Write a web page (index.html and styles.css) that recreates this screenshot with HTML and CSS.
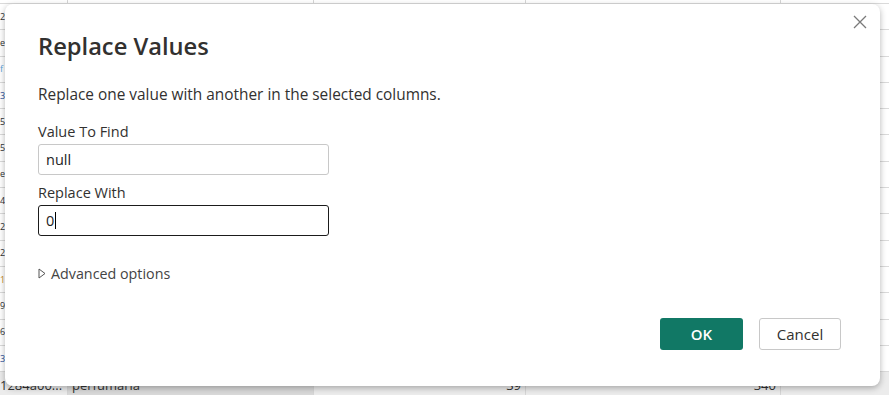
FILE: index.html
```html
<!DOCTYPE html>
<html lang="en">
<head>
  <meta charset="UTF-8">
  <title>Replace Values</title>
  <link rel="stylesheet" href="styles.css">
</head>
<body>

  <!-- grid behind the dialog -->
  <div class="sheet">
    <div class="row top"><div class="cell c1"></div><div class="cell c2"></div><div class="cell c3"></div><div class="cell c4"></div><div class="cell c5"></div></div>
    <div class="row"><div class="cell c1"><span class="peek">2</span></div><div class="cell c2"></div><div class="cell c3"></div><div class="cell c4"></div><div class="cell c5"></div></div>
    <div class="row"><div class="cell c1"><span class="peek">e</span></div><div class="cell c2"></div><div class="cell c3"></div><div class="cell c4"></div><div class="cell c5"></div></div>
    <div class="row"><div class="cell c1 blue-l"><span class="peek">f</span></div><div class="cell c2"></div><div class="cell c3"></div><div class="cell c4"></div><div class="cell c5"></div></div>
    <div class="row"><div class="cell c1 blue"><span class="peek">3</span></div><div class="cell c2"></div><div class="cell c3"></div><div class="cell c4"></div><div class="cell c5"></div></div>
    <div class="row"><div class="cell c1"><span class="peek">5</span></div><div class="cell c2"></div><div class="cell c3"></div><div class="cell c4"></div><div class="cell c5"></div></div>
    <div class="row"><div class="cell c1"><span class="peek">5</span></div><div class="cell c2"></div><div class="cell c3"></div><div class="cell c4"></div><div class="cell c5"></div></div>
    <div class="row"><div class="cell c1"><span class="peek">e</span></div><div class="cell c2"></div><div class="cell c3"></div><div class="cell c4"></div><div class="cell c5"></div></div>
    <div class="row"><div class="cell c1"><span class="peek">4</span></div><div class="cell c2"></div><div class="cell c3"></div><div class="cell c4"></div><div class="cell c5"></div></div>
    <div class="row"><div class="cell c1"><span class="peek">2</span></div><div class="cell c2"></div><div class="cell c3"></div><div class="cell c4"></div><div class="cell c5"></div></div>
    <div class="row"><div class="cell c1"><span class="peek">2</span></div><div class="cell c2"></div><div class="cell c3"></div><div class="cell c4"></div><div class="cell c5"></div></div>
    <div class="row"><div class="cell c1 orange"><span class="peek">1</span></div><div class="cell c2"></div><div class="cell c3"></div><div class="cell c4"></div><div class="cell c5"></div></div>
    <div class="row"><div class="cell c1"><span class="peek">9</span></div><div class="cell c2"></div><div class="cell c3"></div><div class="cell c4"></div><div class="cell c5"></div></div>
    <div class="row"><div class="cell c1"><span class="peek">6</span></div><div class="cell c2"></div><div class="cell c3"></div><div class="cell c4"></div><div class="cell c5"></div></div>
    <div class="row"><div class="cell c1 blue"><span class="peek">3</span></div><div class="cell c2"></div><div class="cell c3"></div><div class="cell c4"></div><div class="cell c5"></div></div>
    <div class="row last"><div class="cell c1">1284a00...</div><div class="cell c2">perfumaria</div><div class="cell c3 num">39</div><div class="cell c4 num">340</div><div class="cell c5"></div></div>
  </div>

  <!-- dialog -->
  <div class="dialog">
    <button class="close-btn" aria-label="Close">
      <svg width="14" height="14" viewBox="0 0 14 14">
        <path d="M1 1 L13 13 M13 1 L1 13" stroke="#7a7a7a" stroke-width="1.3" fill="none"/>
      </svg>
    </button>

    <h1 class="dialog-title">Replace Values</h1>
    <p class="dialog-desc">Replace one value with another in the selected columns.</p>

    <label class="field-label">Value To Find</label>
    <div class="text-input">null</div>

    <label class="field-label">Replace With</label>
    <div class="text-input focused">0<span class="caret"></span></div>

    <div class="advanced">
      <svg width="8" height="11" viewBox="0 0 8 11">
        <path d="M1 1 L7 5.5 L1 10 Z" stroke="#555" stroke-width="1" fill="none"/>
      </svg>
      <span>Advanced options</span>
    </div>

    <div class="dialog-footer">
      <button class="btn btn-primary">OK</button>
      <button class="btn btn-secondary">Cancel</button>
    </div>
  </div>

</body>
</html>
```

FILE: styles.css
```css
body {
  margin: 0;
  padding: 0;
  background-color: #fff;
  font-family: 'Open Sans', 'Noto Sans', sans-serif;
  width: 889px;
  height: 395px;
  overflow: hidden;
  position: relative;
}

/* spreadsheet behind */
.sheet {
  display: flex;
  flex-direction: column;
  font-size: 13px;
  color: #333;
}

.row {
  display: flex;
  height: 26.3px;
  border-bottom: 1px solid #dadada;
  box-sizing: border-box;
}

.row.top {
  height: 4px;
}

.row.last {
  height: 26px;
  background-color: #ececec;
}

.cell {
  border-right: 1px solid #d6d6d6;
  box-sizing: border-box;
  display: flex;
  align-items: center;
  white-space: nowrap;
  overflow: hidden;
  padding: 0 4px;
}

.c1 { width: 68px; padding-left: 0; }
.c2 { width: 246px; }
.c3 { width: 212px; }
.c4 { width: 255px; }
.c5 { flex: 1; border-right: none; }

.peek {
  font-size: 9px;
  line-height: 12px;
}

.row.last .c2 {
  background-color: #d9d9d9;
}

.num {
  justify-content: flex-end;
}

.blue { color: #2b4f9a; }
.blue-l { color: #5aa0d8; }
.orange { color: #c98a2a; }

/* dialog */
.dialog {
  position: absolute;
  left: 5px;
  top: 4px;
  width: 875px;
  height: 382px;
  background-color: #fff;
  border-radius: 8px;
  box-shadow: 0 2px 6px rgba(0, 0, 0, 0.3);
  box-sizing: border-box;
  padding: 26px 39px 36px 33px;
  display: flex;
  flex-direction: column;
  align-items: flex-start;
  color: #323130;
}

.close-btn {
  position: absolute;
  top: 6px;
  right: 8px;
  width: 24px;
  height: 24px;
  border: none;
  background: none;
  padding: 0;
  display: flex;
  align-items: center;
  justify-content: center;
  cursor: pointer;
}

.dialog-title {
  margin: 0;
  font-size: 23.7px;
  font-weight: 600;
  line-height: 32px;
}

.dialog-desc {
  margin: 23px 0 0;
  font-size: 15.4px;
  line-height: 20px;
}

.field-label {
  margin-top: 17px;
  font-size: 14.5px;
  line-height: 20px;
}

.text-input {
  margin-top: 2px;
  width: 291px;
  height: 31px;
  box-sizing: border-box;
  border: 1px solid #c8c8c8;
  border-radius: 3px;
  padding: 0 7px;
  font-size: 14.5px;
  display: flex;
  align-items: center;
  color: #222;
}

.text-input + .field-label {
  margin-top: 8px;
}

.text-input.focused {
  border: 1.5px solid #1b1b1b;
}

.caret {
  display: inline-block;
  width: 1px;
  height: 17px;
  background-color: #000;
  margin-left: 1px;
}

.advanced {
  margin-top: 28px;
  display: flex;
  align-items: center;
  gap: 5px;
  font-size: 14.3px;
  color: #444;
}

.dialog-footer {
  margin-top: auto;
  align-self: flex-end;
  display: flex;
  gap: 16px;
}

.btn {
  height: 32px;
  border-radius: 3px;
  font-family: 'Open Sans', 'Noto Sans', sans-serif;
  font-size: 15px;
  font-weight: 600;
  cursor: pointer;
}

.btn-primary {
  width: 83px;
  background-color: #117865;
  color: #fff;
  border: none;
}

.btn-secondary {
  width: 82px;
  background-color: #fff;
  color: #323130;
  border: 1px solid #c8c8c8;
  font-weight: 500;
}
```
